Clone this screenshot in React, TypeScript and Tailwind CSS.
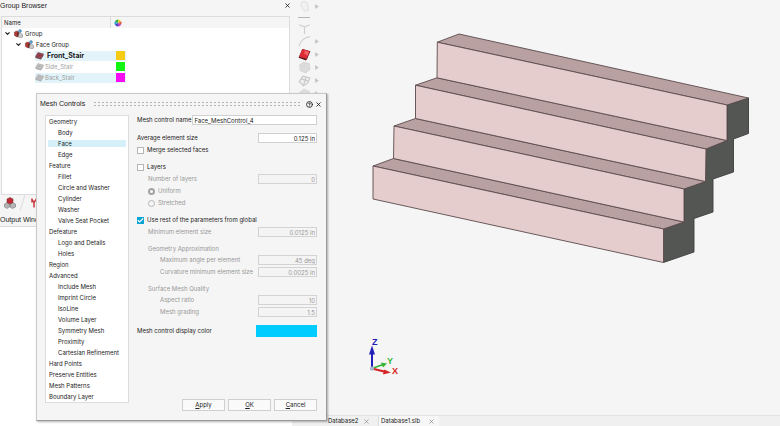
import React from 'react';
import { Check, ChevronDown, CircleHelp, X } from 'lucide-react';

interface CategoryItem {
  label: string;
  child?: boolean;
  selected?: boolean;
}

const categories: CategoryItem[] = [
  { label: 'Geometry' },
  { label: 'Body', child: true },
  { label: 'Face', child: true, selected: true },
  { label: 'Edge', child: true },
  { label: 'Feature' },
  { label: 'Fillet', child: true },
  { label: 'Circle and Washer', child: true },
  { label: 'Cylinder', child: true },
  { label: 'Washer', child: true },
  { label: 'Valve Seat Pocket', child: true },
  { label: 'Defeature' },
  { label: 'Logo and Details', child: true },
  { label: 'Holes', child: true },
  { label: 'Region' },
  { label: 'Advanced' },
  { label: 'Include Mesh', child: true },
  { label: 'Imprint Circle', child: true },
  { label: 'IsoLine', child: true },
  { label: 'Volume Layer', child: true },
  { label: 'Symmetry Mesh', child: true },
  { label: 'Proximity', child: true },
  { label: 'Cartesian Refinement', child: true },
  { label: 'Hard Points' },
  { label: 'Preserve Entities' },
  { label: 'Mesh Patterns' },
  { label: 'Boundary Layer' },
];

const GroupIcon = () => (
  <svg viewBox="0 0 18 18" className="size-[9px] shrink-0" aria-hidden="true">
    <path d="M1 6l5-2 4 2v8l-4 2-5-3z" fill="#b23a34" stroke="#6d2b25" />
    <path d="M6 8l4-2v8l-4 2z" fill="#6d2a2a" />
    <circle cx="12" cy="4" r="3" fill="#58a4d8" stroke="#4a7fa3" />
    <path d="M9 11l4-3 4 3v5l-4 2-4-2z" fill="#c9c9c9" stroke="#777" />
  </svg>
);

const FaceIcon = ({ active }: { active?: boolean }) => (
  <svg viewBox="0 0 18 16" className="h-2 w-[9px] shrink-0" aria-hidden="true">
    <path d="M6 1l11 3-5 8L1 9z" fill={active ? '#a14353' : '#c4c4c4'} stroke={active ? '#5e3038' : '#a5a5a5'} />
    <path d="M1 9l11 3v3L1 12zM12 12l5-8v3l-5 8z" fill={active ? '#79404a' : '#b0b0b0'} />
    <path d="M4 5l11 3M11 3L6 10" fill="none" stroke={active ? '#74323d' : '#a5a5a5'} />
  </svg>
);

const ColorWheel = () => (
  <svg viewBox="-10 -10 20 20" className="size-2" aria-hidden="true">
    <path d="M0 0V-9A9 9 0 0 1 8-4z" fill="#e6cf33" />
    <path d="M0 0L8-4A9 9 0 0 1 8 4z" fill="#e0564e" />
    <path d="M0 0L8 4A9 9 0 0 1 0 9z" fill="#c13fc0" />
    <path d="M0 0V9A9 9 0 0 1-8 4z" fill="#4244c9" />
    <path d="M0 0L-8 4A9 9 0 0 1-8-4z" fill="#2e9fcf" />
    <path d="M0 0L-8-4A9 9 0 0 1 0-9z" fill="#38b34a" />
  </svg>
);

interface TreeRowProps {
  name: string;
  color: string;
  active?: boolean;
  highlighted?: boolean;
}

const TreeRow: React.FC<TreeRowProps> = ({ name, color, active, highlighted }) => (
  <div className="flex h-[11px] items-center pl-[33px]">
    <div className={`flex h-[10px] w-[91px] items-center pr-[1px] ${highlighted ? 'bg-[#e2f4fa]' : ''}`}>
      <FaceIcon active={active} />
      <span className={`flex-1 ${active ? 'pl-[3px] text-[7px] font-bold text-[#222]' : 'pl-[1px] text-[#a0a0a0]'}`}>{name}</span>
      <span className={`size-[9px] ${color}`} />
    </div>
  </div>
);

const GroupBrowser = () => (
  <aside className="flex w-[292px] shrink-0 flex-col">
    <div className="flex h-4 items-start justify-between pr-[1px] font-['Liberation_Sans',sans-serif] text-[7px] leading-[11px]">
      <h2>Group Browser</h2>
      <button type="button" aria-label="Close group browser" className="mt-[2px]">
        <X className="size-[7px]" strokeWidth={3} />
      </button>
    </div>
    <div className="mr-[2px] ml-[1px] h-[179px] border border-[#dcdcdc] bg-white">
      <div className="flex h-[11px] items-center bg-[#f5f5f5]">
        <span className="h-full w-[109px] border-r border-[#dcdcdc] pl-[2px] leading-[11px]">Name</span>
        <span className="pl-[3px]"><ColorWheel /></span>
      </div>
      <div className="flex h-[11px] items-center pl-[2px]">
        <ChevronDown className="mr-[3px] size-[7px]" strokeWidth={4} />
        <GroupIcon />
        <span className="pl-[2px]">Group</span>
      </div>
      <div className="flex h-[11px] items-center pl-[13px]">
        <ChevronDown className="mr-[3px] size-[7px]" strokeWidth={4} />
        <GroupIcon />
        <span className="pl-[2px]">Face Group</span>
      </div>
      <TreeRow name="Front_Stair" color="bg-[#f5cb13]" active highlighted />
      <TreeRow name="Side_Stair" color="bg-[#12f512]" />
      <TreeRow name="Back_Stair" color="bg-[#f80cf4]" highlighted />
    </div>
    <div className="flex h-4 items-center">
      <button type="button" aria-label="Groups" className="flex w-5 justify-center">
        <svg viewBox="0 0 24 24" className="size-3" aria-hidden="true">
          <path d="M1 14l5-3 5 3v6l-5 3-5-3zM12 14l5-3 6 3v6l-6 3-5-3z" fill="#b5b5b5" stroke="#666" />
          <path d="M6 4l6-3 6 3v7l-6 3-6-3z" fill="#c22c34" stroke="#6d2529" />
        </svg>
      </button>
      <svg viewBox="0 0 6 16" className="h-4 w-[6px]" fill="none" stroke="#dcdcdc" aria-hidden="true">
        <path d="M0 16L5 0" />
      </svg>
      <button type="button" aria-label="Filters" className="flex w-4 justify-center">
        <svg viewBox="0 0 12 20" className="h-[10px] w-[6px]" fill="none" stroke="#c9343e" strokeWidth="3" aria-hidden="true">
          <path d="M1 2l5 7 5-7M6 9v10M2 1v8" />
        </svg>
      </button>
    </div>
    <h2 className="h-4 border-b border-[#dcdcdc] font-['Liberation_Sans',sans-serif] text-[7px] leading-[18px]">Output Window</h2>
    <div className="flex-1 bg-white" />
  </aside>
);

const PaletteArrow = () => (
  <svg viewBox="0 0 6 8" className="h-[5px] w-1" aria-hidden="true">
    <path d="M0 0l6 4-6 4z" fill="#c5c5c5" />
  </svg>
);

const paletteIcons = [
  <path key="a" d="M7 3h8l4 7v10h-8l-6-9z" fill="#f1f1f1" stroke="#d0d0d0" />,
  <path key="b" d="M2 5l10 4 10-4M12 9v13" fill="none" stroke="#cfcfcf" strokeWidth="2" />,
  <path key="c" d="M2 21C4 12 10 5 22 3" fill="none" stroke="#cfcfcf" strokeWidth="2" />,
  <g key="d">
    <path d="M8 2l15 4-6 14-2 3L1 18z" fill="#5c1a20" />
    <path d="M8 2l14 4-6 14-14-4z" fill="#dd2c36" />
    <path d="M12 5l8 2-2 7-6-3z" fill="#f4636a" />
  </g>,
  <path key="e" d="M3 7l7-5 11 3 1 11-8 6-10-4z" fill="#dcdcdc" stroke="#cacaca" />,
  <path key="f" d="M2 14L9 4l13 3-4 10-8 5zM6 9l14 4M15 5l-5 17" fill="#ececec" stroke="#c9c9c9" strokeWidth="2" />,
  <path key="g" d="M3 10l8-6 10 4v12H3z" fill="#dedede" stroke="#cfcfcf" />,
];

const Palette = () => (
  <nav aria-label="Selection tools" className="w-8 shrink-0 pl-[6px]">
    {paletteIcons.map((icon, index) => (
      <React.Fragment key={index}>
        <button type="button" aria-label={`Selection tool ${index + 1}`} className="flex h-[13px] w-full items-center gap-1">
          <svg viewBox="0 0 24 24" className="size-[13px]" aria-hidden="true">{icon}</svg>
          {index !== 1 && <PaletteArrow />}
        </button>
        {index === 0 && <div className="my-1 w-3 border-t border-[#b5b5b5]" />}
      </React.Fragment>
    ))}
  </nav>
);

const StairModel = () => (
  <svg viewBox="324 0 456 414" className="min-w-0 flex-1" role="img" aria-label="Stair model">
    <g stroke="#5b4b4d" strokeWidth="0.9" strokeLinejoin="round">
      <path d="M748.5 97.5V133L733.5 138.500V171.500L713 178.500V211.500L694 218V251.500L663.500 262V228.500L684 221.500V188.500L705.500 181V148.500L727 140V104.500z" fill="#545654" stroke="#3c3c3c" />
      <g fill="#b9a0a1">
        <path d="M437.3 41.7L459 33.5L748.5 97.5L727 104.5z" />
        <path d="M415.5 84.7L437 77.3L727 140L706 148.5z" />
        <path d="M394 125.5L415.5 118L705.5 181L684 188.5z" />
        <path d="M373 165.5L393.5 158L684 221.5L663.5 228.5z" />
      </g>
      <g fill="#e5cdcd">
        <path d="M437.3 41.7L727 104.5V140L437 77.3z" />
        <path d="M415.5 84.7L706 148.5L705.5 181L415.5 118z" />
        <path d="M394 125.5L684 188.5V221.5L393.5 158z" />
        <path d="M373 165.5L663.5 228.5V262L373 198.5z" />
      </g>
    </g>
    <g>
      <path d="M372 367V352" stroke="#2020b8" strokeWidth="2" />
      <path d="M369 354L372 345L375 354z" fill="#2020b8" />
      <path d="M372 368L383 364" stroke="#35b535" strokeWidth="1.5" />
      <path d="M381 362L387 363L383 367z" fill="#35b535" />
      <path d="M372 368L384 371" stroke="#d62222" strokeWidth="2" />
      <path d="M384 369L391 372L383 374z" fill="#d62222" />
      <rect x="370" y="366" width="4" height="4" rx="1" fill="#a9b4cf" />
    </g>
    <g className="font-['Liberation_Sans',sans-serif] text-[9px] font-bold">
      <text x="372" y="344" fill="#2020b8">Z</text>
      <text x="387" y="363" fill="#35b535">Y</text>
      <text x="392" y="373" fill="#d62222">X</text>
    </g>
  </svg>
);

const DatabaseTabs = () => (
  <footer className="flex h-[11px] shrink-0 border-t border-[#e2e2e2] bg-[#f0f0f0]">
    {['Database2', 'Database1.slb'].map((name, index) => (
      <div key={name} className={`flex items-center justify-between ${index === 0 ? 'w-[86px] pr-2 pl-9' : 'w-[61px] border-l border-[#dcdcdc] bg-[#f7f7f7] pr-1 pl-[2px]'}`}>
        <button type="button">{name}</button>
        <button type="button" aria-label={`Close ${name}`}>
          <X className="size-[7px] text-[#777]" strokeWidth={2} />
        </button>
      </div>
    ))}
  </footer>
);

interface ValueRowProps {
  id: string;
  label: string;
  value: string;
  indent?: 'none' | 'one' | 'two';
  disabled?: boolean;
}

const indents = { none: '', one: 'pl-[11px]', two: 'pl-[23px]' };

const ValueRow: React.FC<ValueRowProps> = ({ id, label, value, indent = 'none', disabled }) => (
  <div className={`flex h-3 items-center justify-between ${indents[indent]} ${disabled ? 'text-[#989898]' : ''}`}>
    <label htmlFor={id}>{label}</label>
    <input
      id={id}
      defaultValue={value}
      disabled={disabled}
      className={`h-[10px] w-[59px] border px-[1px] text-right ${disabled ? 'border-[#d3d3d3] bg-[#f4f4f4]' : 'border-[#d0d0d0] bg-white'}`}
    />
  </div>
);

const CheckRow = ({ label, checked }: { label: string; checked?: boolean }) => (
  <label className="flex h-3 items-center gap-[3px]">
    <span className="relative flex size-[7px]">
      <input
        type="checkbox"
        defaultChecked={checked}
        className="peer size-[7px] appearance-none border border-[#b5b5b5] bg-white checked:border-[#0aa5d5] checked:bg-[#0aa5d5]"
      />
      <Check className="pointer-events-none absolute inset-0 hidden size-[7px] text-white peer-checked:block" strokeWidth={4} />
    </span>
    {label}
  </label>
);

const RadioRow = ({ label, checked }: { label: string; checked?: boolean }) => (
  <label className="flex h-3 items-center gap-[3px] pl-[11px] text-[#989898]">
    <input
      type="radio"
      name="layer-mode"
      defaultChecked={checked}
      disabled
      className="size-[7px] appearance-none rounded-full border border-[#b5b5b5] checked:border-2 checked:border-[#a3a3a3]"
    />
    {label}
  </label>
);

const dialogButtons = [
  { mnemonic: 'A', rest: 'pply' },
  { mnemonic: 'O', rest: 'K' },
  { mnemonic: 'C', rest: 'ancel' },
];

const MeshControlsDialog = () => (
  <section
    role="dialog"
    aria-labelledby="mesh-controls-title"
    className="absolute top-[93px] left-9 flex w-[291px] flex-col border border-[#c9c9c9] border-r-[#9a9a9a] border-b-[#9a9a9a] bg-[#f5f5f5] shadow-[1px_1px_2px_rgba(0,0,0,0.3)]"
  >
    <header className="flex h-5 items-center pr-1 pl-[3px]">
      <h1 id="mesh-controls-title" className="font-['Liberation_Sans',sans-serif] text-[7px]">Mesh Controls</h1>
      <div className="mr-1 ml-2 h-[6px] flex-1 bg-[radial-gradient(circle,#b5b5b5_1px,transparent_1px)] bg-[length:4px_3px]" />
      <button type="button" aria-label="Help" className="mr-[2px]">
        <CircleHelp className="size-[7px]" strokeWidth={3} />
      </button>
      <button type="button" aria-label="Close dialog">
        <X className="size-[7px]" strokeWidth={3} />
      </button>
    </header>
    <div className="flex pr-[9px] pb-[9px] pl-2">
      <ul className="mt-[1px] w-[84px] shrink-0 self-start border border-[#dcdcdc] bg-white px-[2px]">
        {categories.map((item) => (
          <li key={item.label} className="flex h-[11px] items-center">
            <button
              type="button"
              className={`h-[7px] w-full text-left leading-[7px] ${item.child ? 'pl-[10px]' : 'pl-[1px]'} ${item.selected ? 'bg-[#d5f0f8]' : ''}`}
            >
              {item.label}
            </button>
          </li>
        ))}
      </ul>
      <div className="flex flex-1 flex-col pl-2">
        <div className="flex h-3 items-center gap-[1px]">
          <label htmlFor="control-name">Mesh control name</label>
          <input id="control-name" defaultValue="Face_MeshControl_4" className="h-[10px] min-w-0 flex-1 border border-[#d0d0d0] bg-white px-[1px]" />
        </div>
        <div className="mt-[6px]">
          <ValueRow id="average-size" label="Average element size" value="0.125 in" />
          <CheckRow label="Merge selected faces" />
        </div>
        <div className="mt-[5px]">
          <CheckRow label="Layers" />
          <ValueRow id="layer-count" label="Number of layers" value="0" indent="one" disabled />
          <RadioRow label="Uniform" checked />
          <RadioRow label="Stretched" />
        </div>
        <div className="mt-[5px]">
          <CheckRow label="Use rest of the parameters from global" checked />
          <ValueRow id="min-size" label="Minimum element size" value="0.0125 in" indent="one" disabled />
        </div>
        <fieldset className="mt-[5px]">
          <legend className="h-[11px] pl-[11px] leading-[11px] text-[#989898]">Geometry Approximation</legend>
          <ValueRow id="max-angle" label="Maximum angle per element" value="45 deg" indent="two" disabled />
          <ValueRow id="curvature-size" label="Curvature minimum element size" value="0.0025 in" indent="two" disabled />
        </fieldset>
        <fieldset className="mt-[5px]">
          <legend className="h-[11px] pl-[11px] leading-[11px] text-[#989898]">Surface Mesh Quality</legend>
          <ValueRow id="aspect-ratio" label="Aspect ratio" value="10" indent="two" disabled />
          <ValueRow id="mesh-grading" label="Mesh grading" value="1.5" indent="two" disabled />
        </fieldset>
        <div className="mt-[7px] flex h-3 items-center justify-between">
          <span>Mesh control display color</span>
          <button type="button" aria-label="Mesh control display color" className="h-3 w-[61px] bg-[#00ccff]" />
        </div>
        <div className="mt-[62px] flex justify-end gap-[3px]">
          {dialogButtons.map(({ mnemonic, rest }) => (
            <button key={mnemonic} type="button" className="h-3 w-[43px] border border-[#cfcfcf] bg-[#fafafa]">
              <u>{mnemonic}</u>{rest}
            </button>
          ))}
        </div>
      </div>
    </div>
  </section>
);

export default function App() {
  return (
    <div className="relative flex min-h-screen bg-[#f5f5f5] font-['Inter',sans-serif] text-[6px] leading-[8px] text-[#222]">
      <GroupBrowser />
      <main className="flex min-w-0 flex-1 flex-col">
        <div className="flex flex-1">
          <Palette />
          <StairModel />
        </div>
        <DatabaseTabs />
      </main>
      <MeshControlsDialog />
    </div>
  );
}
